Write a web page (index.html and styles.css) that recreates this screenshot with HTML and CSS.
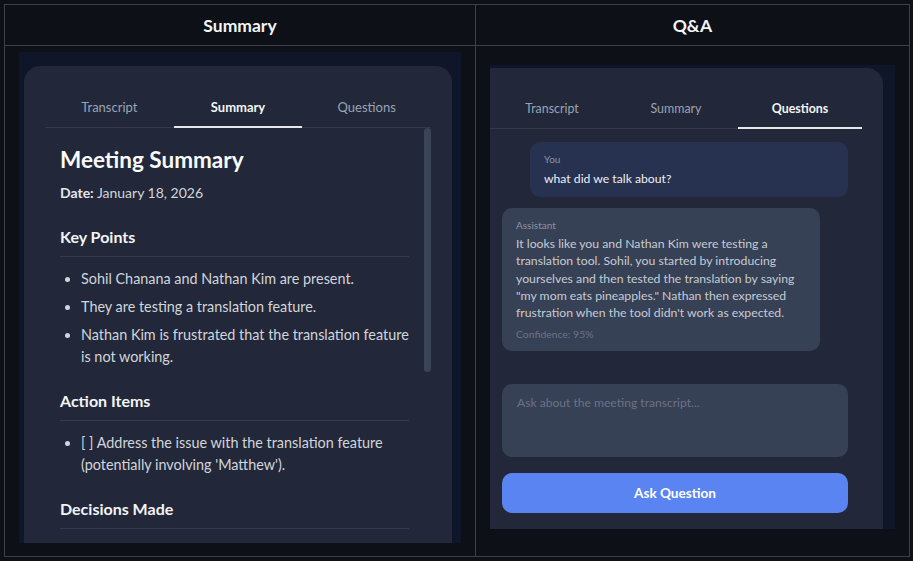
FILE: index.html
```html
<!DOCTYPE html>
<html lang="en">
<head>
  <meta charset="UTF-8">
  <meta name="viewport" content="width=device-width, initial-scale=1.0">
  <title>Meeting Assistant</title>
  <link rel="stylesheet" href="styles.css">
</head>
<body>
  <div class="board">
    <div class="head">Summary</div>
    <div class="head head-right">Q&amp;A</div>

    <!-- 左邊：會議摘要 -->
    <div class="cell cell-left">
      <div class="frame frame-left">
        <div class="card card-left">
          <div class="tabs">
            <div class="tab">Transcript</div>
            <div class="tab active">Summary</div>
            <div class="tab">Questions</div>
          </div>
          <div class="summary-scroll">
            <div class="summary">
              <h1>Meeting Summary</h1>
              <p class="date"><strong>Date:</strong> January 18, 2026</p>

              <h2>Key Points</h2>
              <ul>
                <li>Sohil Chanana and Nathan Kim are present.</li>
                <li>They are testing a translation feature.</li>
                <li>Nathan Kim is frustrated that the translation feature is not working.</li>
              </ul>

              <h2>Action Items</h2>
              <ul>
                <li>[ ] Address the issue with the translation feature (potentially involving 'Matthew').</li>
              </ul>

              <h2>Decisions Made</h2>
            </div>
            <div class="scroll-thumb"></div>
          </div>
        </div>
      </div>
    </div>

    <!-- 右邊：問答 -->
    <div class="cell cell-right">
      <div class="frame frame-right">
        <div class="card card-right">
          <div class="tabs">
            <div class="tab">Transcript</div>
            <div class="tab">Summary</div>
            <div class="tab active">Questions</div>
          </div>
          <div class="chat">
            <div class="messages">
              <div class="msg msg-user">
                <div class="msg-label">You</div>
                <div class="msg-text">what did we talk about?</div>
              </div>
              <div class="msg msg-bot">
                <div class="msg-label">Assistant</div>
                <div class="msg-text">It looks like you and Nathan Kim were testing a translation tool. Sohil, you started by introducing yourselves and then tested the translation by saying "my mom eats pineapples." Nathan then expressed frustration when the tool didn't work as expected.</div>
                <div class="msg-meta">Confidence: 95%</div>
              </div>
            </div>
            <textarea class="ask-input" placeholder="Ask about the meeting transcript..."></textarea>
            <button class="ask-btn">Ask Question</button>
          </div>
        </div>
      </div>
    </div>
  </div>
</body>
</html>
```

FILE: styles.css
```css
* {
  box-sizing: border-box;
}

body {
  margin: 0;
  background-color: #0d1017;
  font-family: "Lato", "Liberation Sans", sans-serif;
  color: #d1d5db;
}

.board {
  margin: 4px 3px 4px 4px;
  border: 1px solid #3c4048;
  display: grid;
  grid-template-columns: 470px 1fr;
  grid-template-rows: 41px 510px;
}

.head {
  border-bottom: 1px solid #3c4048;
  display: flex;
  align-items: center;
  justify-content: center;
  font-size: 17.5px;
  font-weight: 700;
  color: #f3f4f6;
}

.head-right,
.cell-right {
  border-left: 1px solid #3c4048;
}

.cell-left {
  padding: 6px 14px 13px 14px;
}

.cell-right {
  padding: 19px 14px 27px 14px;
}

.frame {
  height: 100%;
  background-color: #0f1629;
}

.frame-left {
  padding: 14px 9px 0 5px;
}

.frame-right {
  padding: 3px 12px 0 0;
}

.card {
  height: 100%;
  background-color: #222839;
  overflow: hidden;
  display: flex;
  flex-direction: column;
}

.card-left {
  border-radius: 16px 16px 0 0;
  padding: 22px 21px 0 21px;
}

.card-right {
  border-radius: 0 16px 0 0;
  padding: 21px 21px 0 0;
}

/* 分頁 */
.tabs {
  display: flex;
  border-bottom: 1px solid #333a4b;
  flex-shrink: 0;
}

.tab {
  flex: 1;
  height: 40px;
  line-height: 39px;
  text-align: center;
  font-size: 13px;
  color: #9aa3b4;
  margin-bottom: -1px;
}

.tab.active {
  color: #f3f4f6;
  font-weight: 700;
  border-bottom: 2px solid #e5e7eb;
}

.card-right .tab {
  font-size: 12.4px;
}

/* 摘要內容 */
.summary-scroll {
  flex: 1;
  min-height: 0;
  overflow: hidden;
  position: relative;
}

.scroll-thumb {
  position: absolute;
  top: 0;
  right: 0;
  width: 7px;
  height: 244px;
  border-radius: 4px;
  background-color: #3a4457;
}

.summary {
  padding: 18px 22px 24px 15px;
}

.summary h1 {
  margin: 0 0 8px 0;
  font-size: 22.5px;
  line-height: 28px;
  font-weight: 700;
  color: #f9fafb;
}

.summary .date {
  margin: 0 0 2px 0;
  font-size: 14px;
  line-height: 22px;
}

.summary .date strong {
  color: #e5e7eb;
}

.summary h2 {
  margin: 21px 0 0 0;
  padding-bottom: 7px;
  border-bottom: 1px solid #333a4b;
  font-size: 16px;
  line-height: 24px;
  font-weight: 700;
  color: #f3f4f6;
}

.summary ul {
  margin: 11px 0 0 0;
  padding-left: 21px;
}

.summary li {
  font-size: 14.4px;
  line-height: 22px;
}

.summary li + li {
  margin-top: 6px;
}

/* 問答 */
.chat {
  flex: 1;
  display: flex;
  flex-direction: column;
  padding: 13px 14px 0 12px;
}

.messages {
  display: flex;
  flex-direction: column;
  gap: 11px;
}

.msg {
  width: 318px;
  border-radius: 10px;
  padding: 10px 14px 9px 14px;
}

.msg-user {
  align-self: flex-end;
  background-color: #273250;
}

.msg-bot {
  align-self: flex-start;
  background-color: #374155;
  padding-bottom: 10px;
}

.msg-label {
  font-size: 10px;
  line-height: 14px;
  color: #8b93a3;
  margin-bottom: 4px;
}

.msg-user .msg-text {
  font-size: 12.2px;
  line-height: 18px;
  color: #eef0f3;
}

.msg-bot .msg-label {
  margin-bottom: 3px;
}

.msg-bot .msg-text {
  font-size: 12.25px;
  line-height: 17.3px;
  color: #c6cbd4;
}

.msg-meta {
  margin-top: 6px;
  font-size: 10.4px;
  line-height: 14px;
  color: #6b7385;
}

.ask-input {
  margin-top: 33px;
  height: 73px;
  width: 100%;
  resize: none;
  border: none;
  border-radius: 10px;
  background-color: #374155;
  padding: 10px 15px;
  font-family: inherit;
  font-size: 12.1px;
  line-height: 18px;
  color: #e5e7eb;
  outline: none;
}

.ask-input::placeholder {
  color: #6b7385;
}

.ask-btn {
  margin-top: 16px;
  height: 40px;
  width: 100%;
  border: none;
  border-radius: 10px;
  background-color: #5a84f1;
  color: #ffffff;
  font-family: inherit;
  font-size: 13.6px;
  font-weight: 700;
  cursor: pointer;
}
```
